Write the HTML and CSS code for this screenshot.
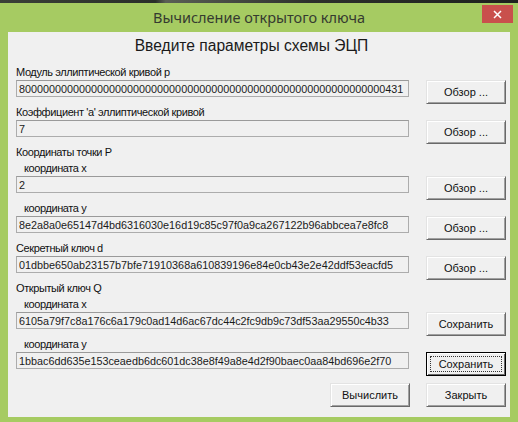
FILE: index.html
```html
<!DOCTYPE html>
<html lang="ru">
<head>
<meta charset="utf-8">
<title>Вычисление открытого ключа</title>
<link rel="stylesheet" href="styles.css">
</head>
<body>
<div class="window">
  <div class="desk"></div>
  <div class="titlebar">
    <span class="spacer"></span>
    <div class="title">Вычисление открытого ключа</div>
    <div class="close-wrap"><div class="close"><svg width="9" height="9" viewBox="0 0 9 9"><path d="M1 1L8 8M8 1L1 8" stroke="#fff" stroke-width="1.5"/></svg></div></div>
  </div>
  <div class="client">
    <h1 class="heading">Введите параметры схемы ЭЦП</h1>

    <div class="label">Модуль эллиптической кривой p</div>
    <div class="row">
      <input class="field" readonly value="8000000000000000000000000000000000000000000000000000000000000431">
      <button class="btn">Обзор ...</button>
    </div>

    <div class="label">Коэффициент 'a' эллиптической кривой</div>
    <div class="row">
      <input class="field" readonly value="7">
      <button class="btn">Обзор ...</button>
    </div>

    <div class="label">Координаты точки P</div>
    <div class="label sub">координата x</div>
    <div class="row">
      <input class="field" readonly value="2">
      <button class="btn">Обзор ...</button>
    </div>

    <div class="label sub">координата y</div>
    <div class="row">
      <input class="field" readonly value="8e2a8a0e65147d4bd6316030e16d19c85c97f0a9ca267122b96abbcea7e8fc8">
      <button class="btn">Обзор ...</button>
    </div>

    <div class="label">Секретный ключ d</div>
    <div class="row">
      <input class="field" readonly value="01dbbe650ab23157b7bfe71910368a610839196e84e0cb43e2e42ddf53eacfd5">
      <button class="btn">Обзор ...</button>
    </div>

    <div class="label">Открытый ключ Q</div>
    <div class="label sub">координата x</div>
    <div class="row">
      <input class="field" readonly value="6105a79f7c8a176c6a179c0ad14d6ac67dc44c2fc9db9c73df53aa29550c4b33">
      <button class="btn">Сохранить</button>
    </div>

    <div class="label sub">координата y</div>
    <div class="row">
      <input class="field" readonly value="1bbac6dd635e153ceaedb6dc601dc38e8f49a8e4d2f90baec0aa84bd696e2f70">
      <button class="btn focused">Сохранить</button>
    </div>

    <div class="actions">
      <button class="btn">Вычислить</button>
      <button class="btn">Закрыть</button>
    </div>
  </div>
</div>
</body>
</html>
```
FILE: styles.css
```css
* { box-sizing: border-box; }
html, body { margin: 0; padding: 0; }
body {
  width: 518px;
  height: 422px;
  overflow: hidden;
  font-family: "Liberation Sans", Arial, sans-serif;
  background: #a6cb62;
}
.window {
  width: 518px;
  height: 422px;
  background: #a6cb62;
  display: flex;
  flex-direction: column;
}
.desk {
  height: 3px;
  background: linear-gradient(90deg, #3b4038 0%, #2a2e2a 30%, #5a5f55 32%, #2d302c 60%, #1e211e 100%);
}
.titlebar {
  height: 29px;
  display: grid;
  grid-template-columns: 1fr auto 1fr;
  align-items: start;
}
.title {
  font-family: "Noto Sans", "Open Sans", sans-serif;
  font-size: 14.5px;
  line-height: 20px;
  padding-top: 4px;
  color: #353a30;
  white-space: nowrap;
}
.close-wrap {
  display: flex;
  justify-content: flex-end;
  padding-right: 5px;
  padding-top: 2px;
}
.close {
  width: 31px;
  height: 18px;
  background: #c9504c;
  display: flex;
  align-items: center;
  justify-content: center;
}
.client {
  margin: 0 8px;
  height: 385px;
  background: #f0f0f0;
  padding: 0 4px 0 8px;
  display: flex;
  flex-direction: column;
}
.heading {
  margin: 0;
  height: 32px;
  padding-top: 4px;
  padding-right: 19px;
  font-size: 15.6px;
  line-height: 20px;
  font-weight: normal;
  text-align: center;
  color: #1a1a1a;
}
.label {
  height: 16px;
  line-height: 16px;
  font-size: 11px;
  letter-spacing: -0.4px;
  color: #111;
  white-space: nowrap;
}
.label.sub { padding-left: 8px; }
.row {
  height: 24px;
  display: flex;
  align-items: flex-start;
  gap: 17px;
}
.field {
  width: 393px;
  height: 17px;
  margin: 0;
  padding: 0 2px;
  border: 1px solid #acacac;
  border-top-color: #9a9a9a;
  background: #f0f0f0;
  font-family: "Liberation Sans", Arial, sans-serif;
  font-size: 10.8px;
  color: #1a1a1a;
  outline: none;
}
.btn {
  width: 80px;
  height: 24px;
  margin: 0;
  padding: 0;
  background: #f0f0f0;
  border: 1px solid;
  border-color: #e3e3e3 #696969 #696969 #e3e3e3;
  box-shadow: inset 1px 1px 0 #fff, inset -1px -1px 0 #a0a0a0;
  font-family: "Liberation Sans", Arial, sans-serif;
  font-size: 11px;
  color: #111;
}
.btn.focused {
  border-color: #000;
  box-shadow: inset 1px 1px 0 #fff, inset -1px -1px 0 #696969;
  outline: 1px dotted #333;
  outline-offset: -5px;
}
.actions {
  margin-top: 7px;
  display: flex;
  justify-content: flex-end;
  gap: 16px;
}
```
